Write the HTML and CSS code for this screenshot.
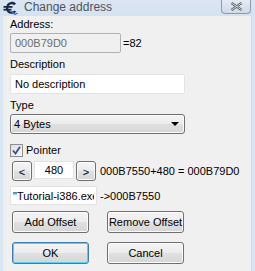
FILE: index.html
```html
<!DOCTYPE html>
<html lang="en">
<head>
    <meta charset="UTF-8">
    <title>Change address</title>
    <link rel="stylesheet" href="styles.css">
</head>
<body>
    <div class="window">
        <div class="titlebar">
            <svg class="app-icon" width="16" height="14" viewBox="0 0 16 14">
                <path d="M13 2.5 C11.5 1 9.5 0.6 7.8 1 C4.8 1.6 3 4 3 7 C3 10 5 12.6 8 12.8 C10 13 11.8 12.2 13.2 10.8 L11.4 9.4 C10.4 10.3 9.2 10.7 8 10.6 C6.2 10.4 5.2 8.8 5.2 7 C5.2 5 6.4 3.4 8.2 3.2 C9.4 3.1 10.4 3.5 11.3 4.2 Z" fill="#1c2a48"/>
                <rect x="0.5" y="5" width="9" height="1.8" fill="#1c2a48"/>
                <rect x="0.5" y="7.8" width="8" height="1.8" fill="#1c2a48"/>
                <path d="M9 11 L12 13.5 L14.5 12" stroke="#2f6fc8" stroke-width="1.2" fill="none"/>
            </svg>
            <span class="title">Change address</span>
            <button class="close-btn">
                <svg width="13" height="9" viewBox="0 0 13 9">
                    <path d="M1.5 1 L11.5 8 M11.5 1 L1.5 8" stroke="#5a5f66" stroke-width="2.4"/>
                    <path d="M1.5 1 L11.5 8 M11.5 1 L1.5 8" stroke="#f4f4f4" stroke-width="0.8"/>
                </svg>
            </button>
        </div>
        <div class="client">
            <label class="lbl lbl-first">Address:</label>
            <div class="row">
                <input class="edit edit-address" type="text" value="000B79D0" disabled>
                <span class="note">=82</span>
            </div>

            <label class="lbl">Description</label>
            <input class="edit edit-wide" type="text" value="No description">

            <label class="lbl lbl-type">Type</label>
            <div class="combo">
                <span>4 Bytes</span>
                <span class="arrow"></span>
            </div>

            <div class="check-row">
                <span class="checkbox">
                    <svg width="9" height="9" viewBox="0 0 9 9">
                        <path d="M1 4.5 L3.5 7.5 L8 0.8" stroke="#3a4f9a" stroke-width="1.8" fill="none"/>
                    </svg>
                </span>
                <span>Pointer</span>
            </div>

            <div class="row offset-row">
                <button class="btn btn-small">&lt;</button>
                <input class="edit edit-offset" type="text" value="480">
                <button class="btn btn-small">&gt;</button>
                <span class="note">000B7550+480 = 000B79D0</span>
            </div>

            <div class="row base-row">
                <input class="edit edit-base" type="text" value="&quot;Tutorial-i386.exe&quot;+000B7550">
                <span class="note">-&gt;000B7550</span>
            </div>

            <div class="row btn-row">
                <button class="btn btn-wide">Add Offset</button>
                <button class="btn btn-wide">Remove Offset</button>
            </div>

            <div class="row btn-row">
                <button class="btn btn-wide btn-default">OK</button>
                <button class="btn btn-wide">Cancel</button>
            </div>
        </div>
    </div>
</body>
</html>
```

FILE: styles.css
```css
* {
    box-sizing: border-box;
    margin: 0;
    padding: 0;
}

body {
    font-family: Tahoma, 'Liberation Sans', Arial, sans-serif;
    font-size: 11px;
    color: #000;
    background: #d9e6f3;
}

.window {
    width: 255px;
    height: 271px;
    background: #d9e6f3;
    display: flex;
    flex-direction: column;
}

.titlebar {
    height: 16px;
    display: flex;
    align-items: flex-start;
    background: linear-gradient(#dbe6f2, #d5e2f0);
    position: relative;
}

.app-icon {
    margin: 1px 0 0 3px;
}

.title {
    margin-left: 5px;
    font-size: 12px;
    line-height: 15px;
    color: #4e5359;
}

.close-btn {
    position: absolute;
    right: 4px;
    top: 0;
    width: 30px;
    height: 14px;
    border: 1px solid #8d9aab;
    border-top: none;
    border-radius: 0 0 4px 4px;
    background: linear-gradient(#e4ebf4, #cfdbe9);
    display: flex;
    align-items: center;
    justify-content: center;
}

.client {
    flex: 1;
    margin: 0 3px 0 3px;
    background: #f0f0f0;
    border-left: 1px solid #e8edf3;
    border-right: 1px solid #cddbea;
    padding: 0 0 0 6px;
    display: flex;
    flex-direction: column;
    align-items: flex-start;
}

.lbl {
    display: block;
    line-height: 14px;
    margin: 4px 0 3px;
    color: #000;
}

.lbl-first {
    margin: 1px 0 2px;
}

.lbl-type {
    margin-bottom: 2px;
}

.row {
    display: flex;
    align-items: center;
}

.note {
    margin-left: 2px;
    line-height: 14px;
}

.edit {
    font-family: inherit;
    font-size: 11px;
    height: 20px;
    padding: 0 4px;
    border: 1px solid #abadb3;
    border-top-color: #b5b9c1;
    border-radius: 2px;
    background: #fff;
    color: #000;
    outline: none;
}

.edit-address {
    width: 111px;
    height: 20px;
    background: #f0f0f0;
    color: #6d6d6d;
    border-color: #adb2b5;
}

.edit-wide {
    width: 175px;
    border-color: #e3e3e3;
}

.combo {
    width: 175px;
    height: 20px;
    border: 1px solid #707070;
    border-radius: 3px;
    background: linear-gradient(#f4f4f4 0%, #ececec 50%, #e0e0e0 51%, #d6d6d6 100%);
    box-shadow: inset 0 0 0 1px #fbfbfb;
    display: flex;
    align-items: center;
    justify-content: space-between;
    padding: 0 4px 0 3px;
}

.arrow {
    width: 0;
    height: 0;
    border-left: 4px solid transparent;
    border-right: 4px solid transparent;
    border-top: 4px solid #000;
    margin-right: 1px;
}

.check-row {
    display: flex;
    align-items: center;
    margin-top: 9px;
    line-height: 14px;
}

.checkbox {
    width: 13px;
    height: 13px;
    border: 1px solid #8e8f8f;
    background: linear-gradient(135deg, #dcdcdc, #fbfbfb);
    display: flex;
    align-items: center;
    justify-content: center;
    margin-right: 3px;
}

.offset-row {
    margin-top: 4px;
    margin-left: 2px;
}

.btn {
    font-family: inherit;
    font-size: 11px;
    color: #000;
    border: 1px solid #707070;
    border-radius: 3px;
    background: linear-gradient(#f4f4f4 0%, #ececec 50%, #e0e0e0 51%, #d6d6d6 100%);
    box-shadow: inset 0 0 0 1px #fbfbfb;
}

.btn-small {
    width: 20px;
    height: 20px;
    padding-top: 2px;
}

.edit-offset {
    width: 40px;
    height: 18px;
    margin: 0 2px 2px 2px;
    text-align: center;
    padding: 0;
    border-color: #e3e3e3;
    border-radius: 0;
}

.offset-row .note {
    margin-left: 4px;
}

.base-row {
    margin-top: 5px;
}

.edit-base {
    width: 87px;
    height: 19px;
    padding: 0 2px;
    border-color: #e3e3e3;
    border-radius: 0;
}

.base-row .note {
    margin-left: 3px;
}

.btn-row {
    margin-left: 2px;
    gap: 18px;
    margin-top: 6px;
}

.btn-row + .btn-row {
    margin-top: 9px;
}

.btn-wide {
    width: 77px;
    height: 22px;
}

.btn-default {
    border-color: #3c7fb1;
    box-shadow: inset 0 0 0 1px #48d4f8;
}
```
